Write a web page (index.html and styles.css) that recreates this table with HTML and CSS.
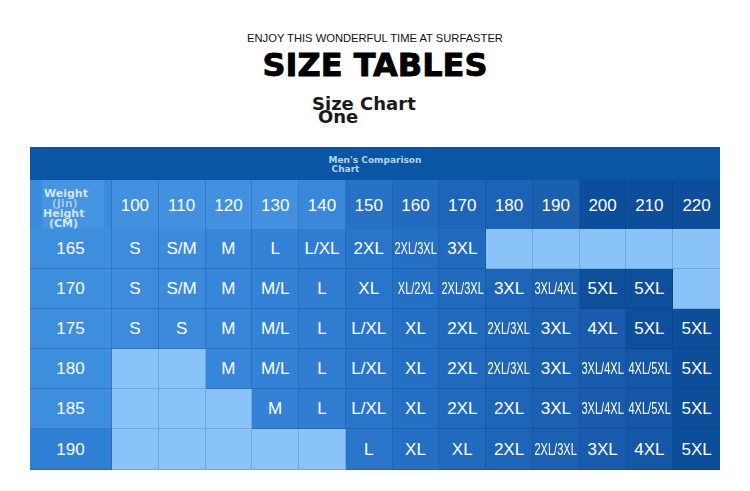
FILE: index.html
```html
<!DOCTYPE html>
<html lang="en">
<head>
<meta charset="utf-8">
<title>Size Tables</title>
<link rel="stylesheet" href="styles.css">
</head>
<body>
<div class="page">
  <p class="tagline">ENJOY THIS WONDERFUL TIME AT SURFASTER</p>
  <h1 class="title">SIZE TABLES</h1>
  <div class="chart-name"><span class="l1">Size Chart</span><span class="l2">One</span></div>

  <div class="table">
    <div class="band"><div class="band-text"><span class="b1">Men's Comparison</span><span class="b2">Chart</span></div></div>

    <div class="row head">
      <div class="cell label-cell"><div class="label-box"><span class="w">Weight</span><span class="jin">(Jin)</span><span class="h">Height</span><span class="cm">(CM)</span></div></div>
      <div class="cell">100</div><div class="cell">110</div><div class="cell">120</div><div class="cell">130</div><div class="cell">140</div><div class="cell">150</div><div class="cell">160</div><div class="cell">170</div><div class="cell">180</div><div class="cell">190</div><div class="cell">200</div><div class="cell">210</div><div class="cell">220</div>
    </div>

    <div class="row">
      <div class="cell">165</div>
      <div class="cell">S</div><div class="cell">S/M</div><div class="cell">M</div><div class="cell">L</div><div class="cell">L/XL</div><div class="cell">2XL</div><div class="cell"><span class="c">2XL/3XL</span></div><div class="cell">3XL</div><div class="cell e"></div><div class="cell e"></div><div class="cell e"></div><div class="cell e"></div><div class="cell e"></div>
    </div>

    <div class="row">
      <div class="cell">170</div>
      <div class="cell">S</div><div class="cell">S/M</div><div class="cell">M</div><div class="cell">M/L</div><div class="cell">L</div><div class="cell">XL</div><div class="cell"><span class="c">XL/2XL</span></div><div class="cell"><span class="c">2XL/3XL</span></div><div class="cell">3XL</div><div class="cell"><span class="c">3XL/4XL</span></div><div class="cell d">5XL</div><div class="cell d">5XL</div><div class="cell e"></div>
    </div>

    <div class="row">
      <div class="cell">175</div>
      <div class="cell">S</div><div class="cell">S</div><div class="cell">M</div><div class="cell">M/L</div><div class="cell">L</div><div class="cell">L/XL</div><div class="cell">XL</div><div class="cell">2XL</div><div class="cell"><span class="c">2XL/3XL</span></div><div class="cell">3XL</div><div class="cell">4XL</div><div class="cell d">5XL</div><div class="cell">5XL</div>
    </div>

    <div class="row">
      <div class="cell">180</div>
      <div class="cell e"></div><div class="cell e"></div><div class="cell">M</div><div class="cell">M/L</div><div class="cell">L</div><div class="cell">L/XL</div><div class="cell">XL</div><div class="cell">2XL</div><div class="cell"><span class="c">2XL/3XL</span></div><div class="cell">3XL</div><div class="cell"><span class="c">3XL/4XL</span></div><div class="cell"><span class="c">4XL/5XL</span></div><div class="cell">5XL</div>
    </div>

    <div class="row">
      <div class="cell">185</div>
      <div class="cell e"></div><div class="cell e"></div><div class="cell e"></div><div class="cell">M</div><div class="cell">L</div><div class="cell">L/XL</div><div class="cell">XL</div><div class="cell">2XL</div><div class="cell">2XL</div><div class="cell">3XL</div><div class="cell"><span class="c">3XL/4XL</span></div><div class="cell"><span class="c">4XL/5XL</span></div><div class="cell">5XL</div>
    </div>

    <div class="row last">
      <div class="cell">190</div>
      <div class="cell e"></div><div class="cell e"></div><div class="cell e"></div><div class="cell e"></div><div class="cell e"></div><div class="cell">L</div><div class="cell">XL</div><div class="cell">XL</div><div class="cell">2XL</div><div class="cell"><span class="c">2XL/3XL</span></div><div class="cell">3XL</div><div class="cell">4XL</div><div class="cell">5XL</div>
    </div>
  </div>
</div>
</body>
</html>
```

FILE: styles.css
```css
* { box-sizing: border-box; }

html, body {
  margin: 0;
  padding: 0;
  background: #ffffff;
}

.page {
  width: 750px;
  padding-top: 32px;
}

.tagline {
  margin: 0;
  font-family: "Liberation Sans", Arial, sans-serif;
  font-size: 11.2px;
  line-height: 12px;
  color: #111111;
  text-align: center;
}

.title {
  margin: 5px 0 0;
  font-family: "DejaVu Sans", sans-serif;
  font-weight: bold;
  font-size: 32px;
  line-height: 32px;
  color: #000000;
  text-align: center;
  -webkit-text-stroke: 0.9px #000;
}

.chart-name {
  margin: 16px 0 0 312px;
  font-family: "DejaVu Sans", sans-serif;
  font-weight: bold;
  font-size: 18px;
  line-height: 13px;
  color: #1a1a1a;
}

.chart-name span { display: block; }
.chart-name .l2 { padding-left: 6px; }

.table {
  margin: 24px 0 0 30px;
  width: 690px;
  font-family: "Liberation Sans", Arial, sans-serif;
  color: #ffffff;
}

.band {
  height: 33px;
  background: #0a56a4;
  padding-top: 9px;
  text-align: center;
}

.band-text {
  display: inline-block;
  text-align: left;
  font-family: "DejaVu Sans", sans-serif;
  font-weight: bold;
  font-size: 9px;
  line-height: 8.5px;
  color: #b9d3f0;
}

.band-text span { display: block; }
.band-text .b2 { padding-left: 3px; }

.row {
  display: grid;
  grid-template-columns: 82px repeat(13, minmax(0, 1fr));
  height: 40px;
}

.row.head { height: 49px; }
.row.last { height: 41px; }

.cell {
  display: flex;
  align-items: center;
  justify-content: center;
  min-width: 0;
  font-size: 17px;
  white-space: nowrap;
  border-right: 1px solid rgba(0, 40, 100, 0.22);
  border-bottom: 1px solid rgba(0, 40, 100, 0.22);
  padding-top: 1px;
}

.c {
  display: inline-block;
  flex: none;
  transform: scaleX(0.65);
}

/* column shading: lighter on the left, deep blue on the right */
.row > .cell:nth-child(1)  { background: #3e8ede; }
.row > .cell:nth-child(2)  { background: #3d8bdd; }
.row > .cell:nth-child(3)  { background: #3c8adc; }
.row > .cell:nth-child(4)  { background: #3886da; }
.row > .cell:nth-child(5)  { background: #3482d6; }
.row > .cell:nth-child(6)  { background: #307dd1; }
.row > .cell:nth-child(7)  { background: #2a75c9; }
.row > .cell:nth-child(8)  { background: #2570c4; }
.row > .cell:nth-child(9)  { background: #216abd; }
.row > .cell:nth-child(10) { background: #1e65b7; }
.row > .cell:nth-child(11) { background: #1b60b1; }
.row > .cell:nth-child(12) { background: #195cad; }
.row > .cell:nth-child(13) { background: #1457a7; }
.row > .cell:nth-child(14) { background: #0c4e9a; border-right: none; }

.row.head > .cell:nth-child(2),
.row.head > .cell:nth-child(3),
.row.head > .cell:nth-child(4),
.row.head > .cell:nth-child(5) { background: #4290df; }
.row.head > .cell:nth-child(6)  { background: #3a88d9; }
.row.head > .cell:nth-child(7)  { background: #2872c6; }
.row.head > .cell:nth-child(8)  { background: #236bbf; }
.row.head > .cell:nth-child(9)  { background: #1e64b8; }
.row.head > .cell:nth-child(10) { background: #1d63b5; }
.row.head > .cell:nth-child(11) { background: #1a5fb0; }
.row.head > .cell:nth-child(12),
.row.head > .cell:nth-child(13),
.row.head > .cell:nth-child(14) { background: #0c4e9b; }
.row.head > .cell { padding-top: 3px; }

.row.last > .cell:nth-child(1) { background: #2f7fd4; }

.row > .cell.d { background: #0e4f9c; }

.row > .cell.e {
  background: #8ac3f7;
  border-right-color: #6ea8e4;
  border-bottom-color: #6ea8e4;
}

/* top-left weight / height label */
.row.head > .cell.label-cell {
  background: #3b8bdd;
  justify-content: flex-start;
  align-items: stretch;
  padding: 0 0 0 12px;
}

.label-box {
  width: 62px;
  background: #4595e3;
  padding: 9px 0 0 2px;
  font-family: "DejaVu Sans", sans-serif;
  font-weight: bold;
  font-size: 11px;
  line-height: 10px;
  color: #d4e6fa;
}

.label-box span { display: block; }
.label-box .jin {
  padding-left: 8px;
  color: #a9c6ec;
  filter: blur(0.6px);
}
.label-box .h { margin-left: -1px; }
.label-box .cm { padding-left: 5px; }
```
